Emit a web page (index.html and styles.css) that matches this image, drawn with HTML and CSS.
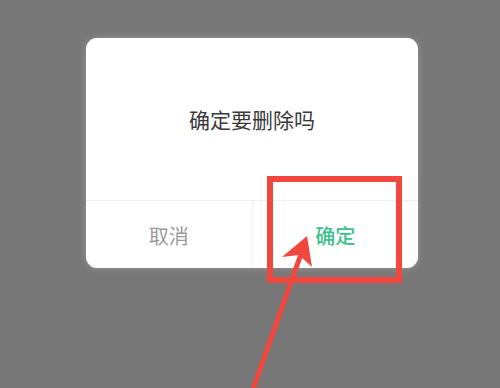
FILE: index.html
```html
<!DOCTYPE html>
<html lang="zh">
<head>
<meta charset="utf-8">
<link rel="stylesheet" href="styles.css">
</head>
<body>
<div class="screen">
  <div class="dialog">
    <div class="message">确定要删除吗</div>
    <div class="actions">
      <div class="btn cancel">取消</div>
      <div class="btn confirm">确定</div>
    </div>
  </div>
  <svg class="annot" width="500" height="388" viewBox="0 0 500 388">
    <rect x="270" y="179" width="129" height="101" fill="none" stroke="#f2473f" stroke-width="6"/>
    <line x1="252" y1="392" x2="301" y2="254" stroke="#f2473f" stroke-width="5"/>
    <polygon points="307,236 312,267 299,255 282,257" fill="#f2473f"/>
  </svg>
</div>
</body>
</html>
```
FILE: styles.css
```css
html, body {
  margin: 0;
  padding: 0;
}
body {
  background: #787878;
  font-family: "Noto Sans CJK SC", "Noto Sans", sans-serif;
}
.screen {
  position: relative;
  width: 500px;
  height: 388px;
  overflow: hidden;
  padding-top: 38px;
  box-sizing: border-box;
}
.dialog {
  margin-left: 86px;
  width: 332px;
  height: 230px;
  background: #fff;
  border-radius: 11px;
  display: flex;
  flex-direction: column;
  box-shadow: 0 0 6px rgba(255,255,255,0.25);
}
.message {
  height: 162px;
  display: flex;
  align-items: center;
  justify-content: center;
  font-size: 21px;
  color: #3a3a3a;
  border-bottom: 1px solid #eeeeee;
}
.actions {
  flex: 1;
  display: flex;
}
.btn {
  flex: 1;
  display: flex;
  align-items: center;
  justify-content: center;
  font-size: 20px;
  padding-top: 2px;
}
.cancel {
  color: #9a9a9a;
  border-right: 1px solid #f2f2f2;
}
.confirm {
  color: #3dbf8c;
  font-weight: 500;
}
.annot {
  position: absolute;
  left: 0;
  top: 0;
}
```
